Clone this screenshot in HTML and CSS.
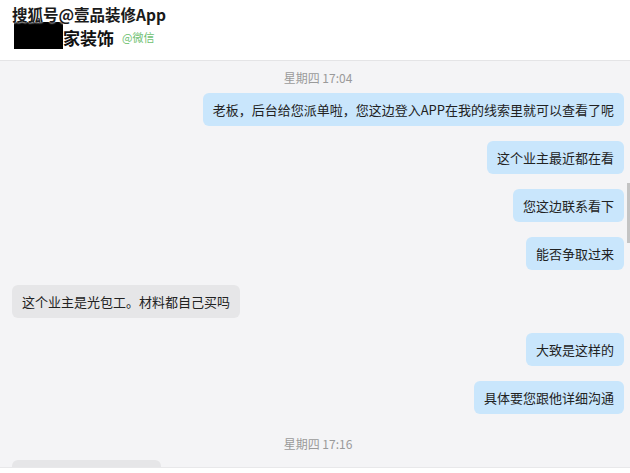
FILE: index.html
```html
<!DOCTYPE html>
<html lang="zh-CN">
<head>
  <meta charset="UTF-8">
  <meta name="viewport" content="width=device-width, initial-scale=1.0">
  <title>聊天记录</title>
  <link rel="stylesheet" href="styles.css">
</head>
<body>
  <div class="header">
    <div class="watermark">搜狐号@壹品装修App</div>
    <div class="name-row">
      <span class="redact"></span>
      <span class="name">家装饰</span>
      <span class="source">@微信</span>
    </div>
  </div>

  <div class="chat">
    <div class="time">星期四 17:04</div>
    <div class="messages">
      <div class="bubble mine">老板，后台给您派单啦，您这边登入APP在我的线索里就可以查看了呢</div>
      <div class="bubble mine">这个业主最近都在看</div>
      <div class="bubble mine">您这边联系看下</div>
      <div class="bubble mine">能否争取过来</div>
      <div class="bubble other">这个业主是光包工。材料都自己买吗</div>
      <div class="bubble mine">大致是这样的</div>
      <div class="bubble mine">具体要您跟他详细沟通</div>
    </div>
    <div class="time time-second">星期四 17:16</div>
    <div class="messages">
      <div class="bubble other blank"></div>
    </div>
    <div class="scrollbar"></div>
  </div>

  <div class="footer"></div>
</body>
</html>
```

FILE: styles.css
```css
/* Estrutura geral */
body {
  margin: 0;
  width: 630px;
  height: 473px;
  overflow: hidden;
  font-family: "Noto Sans CJK SC", "Noto Sans", sans-serif;
  background-color: #ffffff;
  color: #222222;
}
.header {
  position: relative;
  height: 61px;
  box-sizing: border-box;
  padding: 22px 0 0 14px;
  background-color: #ffffff;
  border-bottom: 1px solid #e4e4e6;
}
.watermark {
  position: absolute;
  left: 12px;
  top: 5px;
  font-size: 15.5px;
  line-height: 18px;
  font-weight: bold;
  color: #1a1a1a;
  text-shadow: 0 0 2px #ffffff, 0 0 2px #ffffff;
  z-index: 2;
}
.name-row {
  display: flex;
  align-items: flex-end;
  height: 27px;
}
.redact {
  width: 49px;
  height: 27px;
  background-color: #000000;
}
.name {
  font-size: 17px;
  font-weight: bold;
  color: #111111;
  line-height: 18px;
  margin-bottom: 2px;
}
.source {
  margin: 0 0 5px 8px;
  font-size: 11px;
  line-height: 14px;
  color: #6cc070;
}
.chat {
  position: relative;
  height: 406px;
  overflow: hidden;
  box-sizing: border-box;
  padding: 0 6px 0 12px;
  background-color: #f4f4f6;
  display: flex;
  flex-direction: column;
}
.time {
  margin: 8px 0 6px;
  text-align: center;
  font-size: 12px;
  line-height: 18px;
  color: #9a9a9a;
}
.time-second {
  margin: 21px 0 7px;
}
.messages {
  display: flex;
  flex-direction: column;
  gap: 15px;
}
.bubble {
  padding: 7px 10px;
  font-size: 13px;
  line-height: 19px;
  border-radius: 6px;
  white-space: nowrap;
}
.mine {
  align-self: flex-end;
  background-color: #c9e6fc;
}
.other {
  align-self: flex-start;
  background-color: #e6e6e8;
}
.blank {
  width: 129px;
  height: 19px;
}
.scrollbar {
  position: absolute;
  right: 0;
  top: 122px;
  width: 3px;
  height: 60px;
  background-color: #c4c4c4;
}
.footer {
  height: 6px;
  background-color: #ffffff;
  border-top: 1px solid #e8e8ea;
}
```
